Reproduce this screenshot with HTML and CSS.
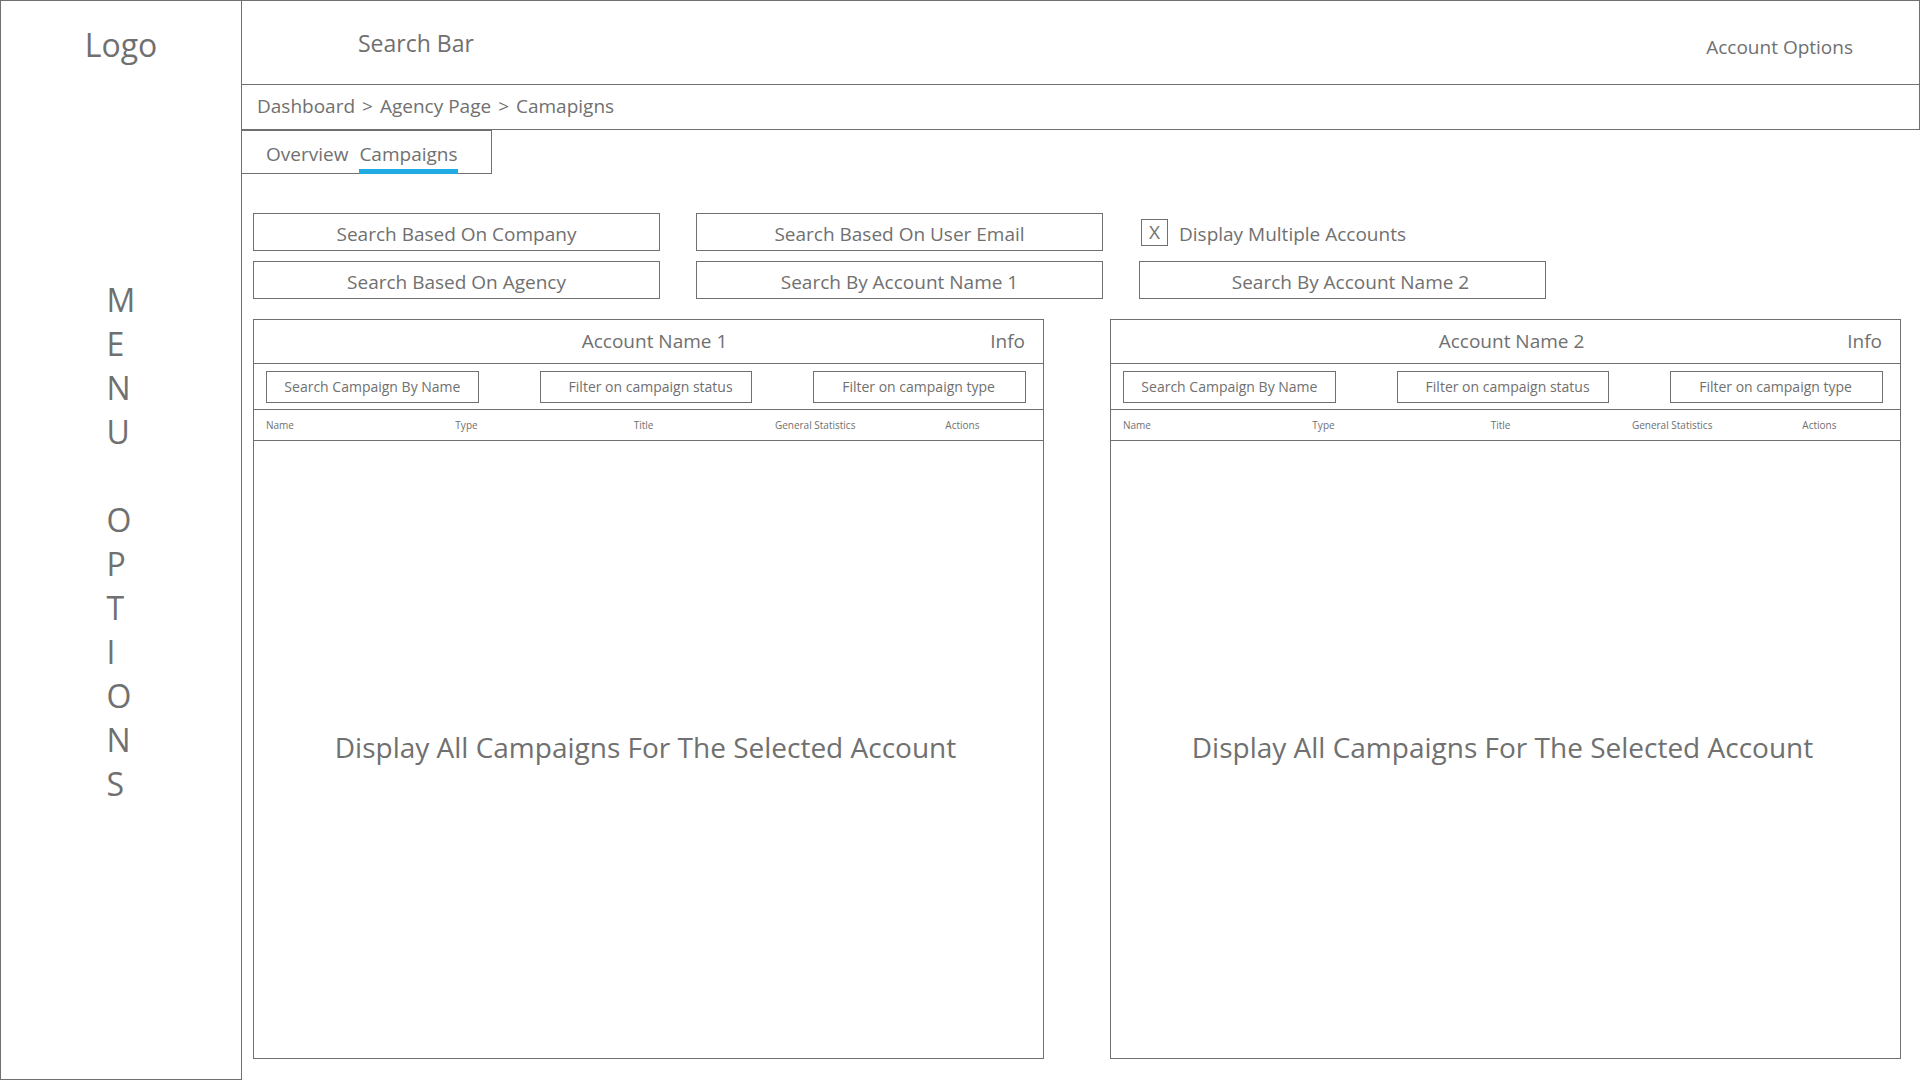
FILE: index.html
```
<!DOCTYPE html>
<html lang="en">
<head>
<meta charset="utf-8">
<title>Campaigns</title>
<link rel="stylesheet" href="styles.css">
</head>
<body>
<div class="layout">
  <aside class="sidebar">
    <a class="logo" href="#">Logo</a>
    <nav class="menu">M<br>E<br>N<br>U<br><br>O<br>P<br>T<br>I<br>O<br>N<br>S</nav>
  </aside>
  <div class="main">
    <header class="topbar">
      <input class="site-search" type="text" placeholder="Search Bar" aria-label="Search Bar">
      <a class="account" href="#">Account Options</a>
    </header>
    <nav class="breadcrumb">
      <a href="#">Dashboard</a><span>&gt;</span><a href="#">Agency Page</a><span>&gt;</span><a href="#">Camapigns</a>
    </nav>
    <nav class="tabs">
      <a class="tab" href="#">Overview</a>
      <a class="tab tab-active" href="#">Campaigns</a>
    </nav>
    <main class="content">
      <form class="search-grid">
        <input class="field" type="text" placeholder="Search Based On Company" aria-label="Company">
        <input class="field" type="text" placeholder="Search Based On User Email" aria-label="User email">
        <div class="check">
          <input class="check-box" type="checkbox" id="multiple" checked>
          <label class="check-label" for="multiple">Display Multiple Accounts</label>
        </div>
        <input class="field" type="text" placeholder="Search Based On Agency" aria-label="Agency">
        <input class="field" type="text" placeholder="Search By Account Name 1" aria-label="Account name 1">
        <input class="field field-second" type="text" placeholder="Search By Account Name 2" aria-label="Account name 2">
      </form>
      <div class="panels">
        <section class="panel">
          <header class="panel-head">
            <h2 class="panel-title">Account Name 1</h2>
            <a class="info" href="#">Info</a>
          </header>
          <div class="filters">
            <input class="filter filter-search" type="text" placeholder="Search Campaign By Name" aria-label="Campaign name">
            <select class="filter" aria-label="Campaign status"><option>Filter on campaign status</option></select>
            <select class="filter" aria-label="Campaign type"><option>Filter on campaign type</option></select>
          </div>
          <table class="campaigns">
            <thead>
              <tr><th class="col-name">Name</th><th class="col-type">Type</th><th class="col-title">Title</th><th class="col-stats">General Statistics</th><th>Actions</th></tr>
            </thead>
            <tbody>
              <tr><td colspan="5">Display All Campaigns For The Selected Account</td></tr>
            </tbody>
          </table>
        </section>
        <section class="panel">
          <header class="panel-head">
            <h2 class="panel-title">Account Name 2</h2>
            <a class="info" href="#">Info</a>
          </header>
          <div class="filters">
            <input class="filter filter-search" type="text" placeholder="Search Campaign By Name" aria-label="Campaign name">
            <select class="filter" aria-label="Campaign status"><option>Filter on campaign status</option></select>
            <select class="filter" aria-label="Campaign type"><option>Filter on campaign type</option></select>
          </div>
          <table class="campaigns">
            <thead>
              <tr><th class="col-name">Name</th><th class="col-type">Type</th><th class="col-title">Title</th><th class="col-stats">General Statistics</th><th>Actions</th></tr>
            </thead>
            <tbody>
              <tr><td colspan="5">Display All Campaigns For The Selected Account</td></tr>
            </tbody>
          </table>
        </section>
      </div>
    </main>
  </div>
</div>
</body>
</html>
```
FILE: styles.css
```
:root {
  --ink: #707070;
  --accent: #20abe2;
}

* {
  box-sizing: border-box;
}

body {
  margin: 0;
  background: #fff;
  color: var(--ink);
  font-family: "Open Sans", "Noto Sans", sans-serif;
  font-size: 19px;
  line-height: 26px;
}

a {
  color: inherit;
  text-decoration: none;
}

input,
select {
  margin: 0;
  border: 1px solid var(--ink);
  border-radius: 0;
  background: #fff;
  color: inherit;
  font: inherit;
  appearance: none;
}

input::placeholder {
  color: inherit;
  opacity: 1;
}

.layout {
  display: flex;
  min-height: 100vh;
}

/* Sidebar */
.sidebar {
  display: flex;
  flex: none;
  flex-direction: column;
  align-items: center;
  width: 242px;
  padding-top: 22px;
  border: 1px solid var(--ink);
  font-size: 32px;
  line-height: 44px;
}

.menu {
  margin-top: 211px;
}

/* Top bars */
.main {
  display: flex;
  flex: 1;
  flex-direction: column;
  min-width: 0;
}

.topbar {
  display: flex;
  align-items: center;
  justify-content: space-between;
  height: 85px;
  padding: 0 66px 0 116px;
  border: solid var(--ink);
  border-width: 1px 1px 1px 0;
}

.site-search {
  width: 480px;
  padding: 0 0 0;
  border: 0;
  font-size: 23px;
  line-height: 32px;
}

.account {
  padding-top: 8px;
}

.breadcrumb {
  display: flex;
  gap: 7px;
  height: 45px;
  padding: 8px 15px;
  border: solid var(--ink);
  border-width: 0 1px 1px 0;
}

.tabs {
  display: flex;
  gap: 11px;
  align-self: flex-start;
  width: 250px;
  height: 44px;
  padding-left: 24px;
  border: solid var(--ink);
  border-width: 1px 1px 1px 0;
}

.tab {
  padding-top: 10px;
}

.tab-active {
  position: relative;
}

.tab-active::after {
  position: absolute;
  right: 0;
  bottom: -1px;
  left: 0;
  height: 5px;
  background: var(--accent);
  content: "";
}

/* Account search */
.content {
  display: flex;
  flex: 1;
  flex-direction: column;
  gap: 20px;
  padding: 39px 19px 21px 11px;
}

.search-grid {
  display: grid;
  grid-template-columns: repeat(3, minmax(0, 407px));
  gap: 10px 36px;
}

.field {
  width: 100%;
  height: 38px;
  padding: 4px 8px 0;
  text-align: center;
}

.field-second {
  padding-left: 24px;
}

.check {
  display: flex;
  gap: 11px;
  align-items: center;
  padding-left: 2px;
}

.check-box {
  width: 27px;
  height: 27px;
  text-align: center;
  line-height: 24px;
}

.check-box:checked::before {
  content: "X";
}

.check-label {
  padding-top: 4px;
}

/* Account panels */
.panels {
  display: grid;
  flex: 1;
  grid-template-columns: repeat(2, minmax(0, 1fr));
  gap: 66px;
}

.panel {
  display: grid;
  grid-template-rows: 44px 46px 1fr;
  border: 1px solid var(--ink);
}

.panel-head {
  display: grid;
  grid-template-columns: 1fr auto 1fr;
  align-items: center;
  padding: 0 18px 2px 30px;
  border-bottom: 1px solid var(--ink);
}

.panel-title {
  grid-column: 2;
  margin: 0;
  font-size: 19px;
  font-weight: 400;
}

.info {
  justify-self: end;
}

.filters {
  display: flex;
  align-items: center;
  justify-content: space-between;
  padding: 0 17px 0 12px;
  border-bottom: 1px solid var(--ink);
}

.filter {
  width: 28%;
  height: 32px;
  padding: 0 0 0 28px;
  font-size: 14px;
}

.filter-search {
  padding: 0;
  text-align: center;
}

.campaigns {
  width: 100%;
  height: 100%;
  border-spacing: 0;
  table-layout: fixed;
}

.campaigns th {
  height: 31px;
  padding: 0 0 0 12px;
  border-bottom: 1px solid var(--ink);
  font-size: 10px;
  font-weight: 400;
  line-height: 14px;
  text-align: left;
}

.campaigns td {
  padding: 0 6px 6px 0;
  font-size: 28px;
  line-height: 38px;
  text-align: center;
}

.col-name {
  width: 24%;
}

.col-type {
  width: 22.6%;
}

.col-title {
  width: 17.9%;
}

.col-stats {
  width: 21.6%;
}
```
